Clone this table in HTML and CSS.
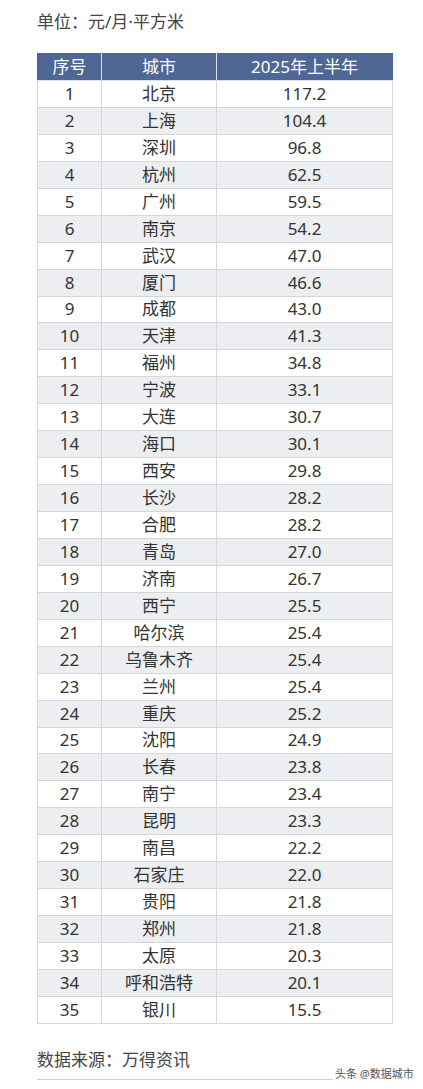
FILE: index.html
```html
<!DOCTYPE html>
<html lang="zh">
<head>
<meta charset="utf-8">
<link rel="stylesheet" href="styles.css">
</head>
<body>
<div class="page">
  <div class="unit">单位：元/月·平方米</div>
  <table class="data">
    <colgroup><col class="c1"><col class="c2"><col class="c3"></colgroup>
    <thead><tr><th>序号</th><th>城市</th><th>2025年上半年</th></tr></thead>
    <tbody>
      <tr><td>1</td><td>北京</td><td>117.2</td></tr>
      <tr><td>2</td><td>上海</td><td>104.4</td></tr>
      <tr><td>3</td><td>深圳</td><td>96.8</td></tr>
      <tr><td>4</td><td>杭州</td><td>62.5</td></tr>
      <tr><td>5</td><td>广州</td><td>59.5</td></tr>
      <tr><td>6</td><td>南京</td><td>54.2</td></tr>
      <tr><td>7</td><td>武汉</td><td>47.0</td></tr>
      <tr><td>8</td><td>厦门</td><td>46.6</td></tr>
      <tr><td>9</td><td>成都</td><td>43.0</td></tr>
      <tr><td>10</td><td>天津</td><td>41.3</td></tr>
      <tr><td>11</td><td>福州</td><td>34.8</td></tr>
      <tr><td>12</td><td>宁波</td><td>33.1</td></tr>
      <tr><td>13</td><td>大连</td><td>30.7</td></tr>
      <tr><td>14</td><td>海口</td><td>30.1</td></tr>
      <tr><td>15</td><td>西安</td><td>29.8</td></tr>
      <tr><td>16</td><td>长沙</td><td>28.2</td></tr>
      <tr><td>17</td><td>合肥</td><td>28.2</td></tr>
      <tr><td>18</td><td>青岛</td><td>27.0</td></tr>
      <tr><td>19</td><td>济南</td><td>26.7</td></tr>
      <tr><td>20</td><td>西宁</td><td>25.5</td></tr>
      <tr><td>21</td><td>哈尔滨</td><td>25.4</td></tr>
      <tr><td>22</td><td>乌鲁木齐</td><td>25.4</td></tr>
      <tr><td>23</td><td>兰州</td><td>25.4</td></tr>
      <tr><td>24</td><td>重庆</td><td>25.2</td></tr>
      <tr><td>25</td><td>沈阳</td><td>24.9</td></tr>
      <tr><td>26</td><td>长春</td><td>23.8</td></tr>
      <tr><td>27</td><td>南宁</td><td>23.4</td></tr>
      <tr><td>28</td><td>昆明</td><td>23.3</td></tr>
      <tr><td>29</td><td>南昌</td><td>22.2</td></tr>
      <tr><td>30</td><td>石家庄</td><td>22.0</td></tr>
      <tr><td>31</td><td>贵阳</td><td>21.8</td></tr>
      <tr><td>32</td><td>郑州</td><td>21.8</td></tr>
      <tr><td>33</td><td>太原</td><td>20.3</td></tr>
      <tr><td>34</td><td>呼和浩特</td><td>20.1</td></tr>
      <tr><td>35</td><td>银川</td><td>15.5</td></tr>
    </tbody>
  </table>
  <div class="source">数据来源：万得资讯</div>
  <div class="rule"></div>
  <div class="watermark">头条 @数据城市</div>
</div>
</body>
</html>
```

FILE: styles.css
```css
html, body {
  margin: 0;
  padding: 0;
  background: #ffffff;
}
body {
  font-family: "Noto Sans", "Noto Sans CJK SC", sans-serif;
  color: #333333;
}
.page {
  position: relative;
  width: 355px;
  padding-left: 37px;
  padding-top: 10px;
  height: 1079px;
}
.unit {
  font-size: 17px;
  line-height: 24px;
  color: #444444;
}
.data {
  margin-top: 19px;
  width: 355px;
  border-collapse: collapse;
  table-layout: fixed;
  font-size: 17px;
}
.c1 { width: 64px; }
.c2 { width: 115px; }
.c3 { width: 176px; }
.data th {
  background: #4e6794;
  color: #ffffff;
  font-weight: normal;
  height: 26px;
  padding: 0;
  line-height: 24px;
  border: 1px solid #dde1ea;
  border-top-color: #4e6794;
}
.data th:first-child { border-left-color: #4e6794; }
.data th:last-child { border-right-color: #4e6794; }
.data td {
  height: 25.94px;
  padding: 0;
  line-height: 24px;
  text-align: center;
  border: 1px solid #d6d6d6;
  color: #333333;
}
.data tbody tr:nth-child(even) td {
  background: #eceef2;
}
.source {
  margin-top: 24px;
  font-size: 17px;
  line-height: 24px;
  color: #444444;
}
.rule {
  margin-top: 7px;
  height: 1px;
  background: #cfcfcf;
}
.watermark {
  position: absolute;
  left: 333px;
  top: 1066px;
  font-size: 11px;
  line-height: 16px;
  color: #555555;
  background: #ffffff;
  padding-left: 2px;
  padding-right: 2px;
  white-space: nowrap;
}
```
